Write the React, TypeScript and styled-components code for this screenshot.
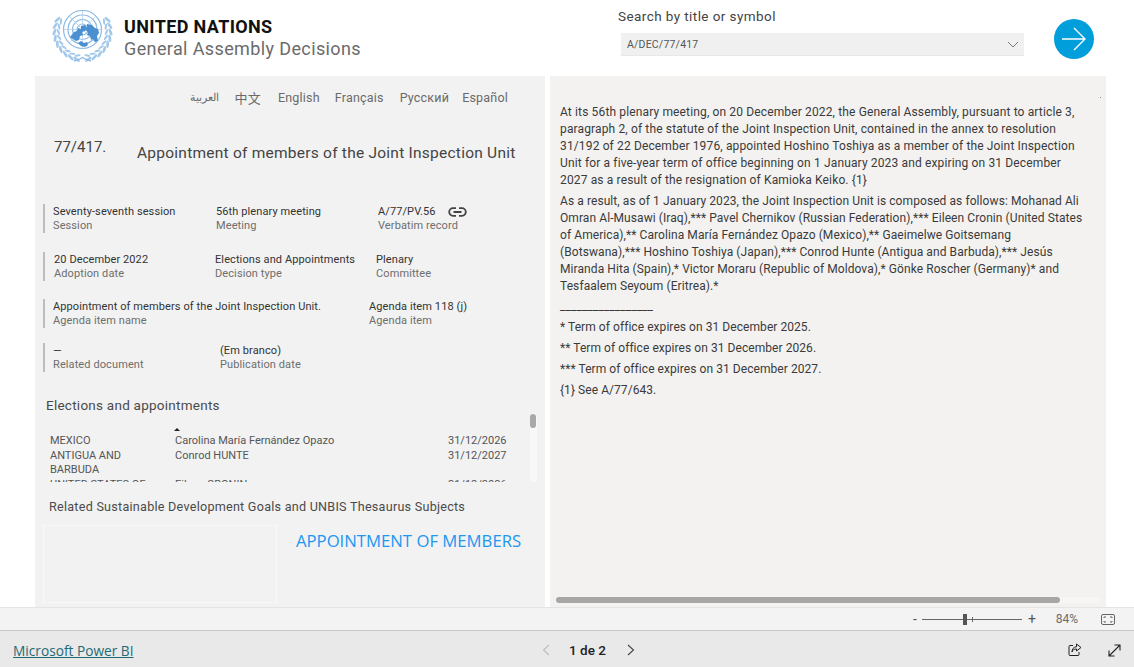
import React from 'react';
import styled, { createGlobalStyle } from 'styled-components';

const DIN = `'Roboto', 'Noto Sans CJK SC', sans-serif`;

const GlobalStyle = createGlobalStyle`
	html, body {
		margin: 0;
		padding: 0;
		background: #fff;
		font-family: ${DIN};
		overflow: hidden;
	}
`;

const Page = styled.div`
	display: flex;
	flex-direction: column;
	width: 1134px;
	height: 667px;
`;

const Header = styled.header`
	display: flex;
	height: 76px;
	padding-left: 51px;
	box-sizing: border-box;
`;

const Brand = styled.div`
	display: flex;
	width: 567px;
	padding-top: 10px;
`;

const BrandText = styled.div`
	margin: 6px 0 0 10px;
`;

const BrandTitle = styled.div`
	font-size: 18px;
	font-weight: 700;
	line-height: 22px;
	letter-spacing: 0.36px;
	color: #111;
`;

const BrandSub = styled.div`
	font-size: 18px;
	line-height: 22px;
	color: #6b6b6b;
	letter-spacing: 0.38px;
`;

const Search = styled.div`
	width: 436px;
	padding-top: 7px;
`;

const SearchLabel = styled.div`
	font-size: 13.5px;
	line-height: 18px;
	letter-spacing: 0.42px;
	color: #444;
`;

const Select = styled.div`
	display: flex;
	align-items: center;
	justify-content: space-between;
	box-sizing: border-box;
	width: 403px;
	height: 23px;
	margin: 8px 0 0 3px;
	padding: 0 5px 0 6px;
	background: #f0f0f0;
	border-bottom: 1px solid #e8e8e8;
	font-size: 10.5px;
	letter-spacing: 0.2px;
	color: #555;
`;

const GoButton = styled.div`
	display: flex;
	align-items: center;
	justify-content: center;
	width: 40px;
	height: 40px;
	margin-top: 19px;
	border-radius: 50%;
	background: #009edb;
`;

const Main = styled.main`
	display: flex;
	gap: 5px;
	height: 531px;
	padding-left: 35px;
`;

const LeftPanel = styled.section`
	box-sizing: border-box;
	width: 510px;
	padding: 0 8px;
	background: #f2f2f2;
`;

const Languages = styled.nav`
	display: flex;
	justify-content: flex-end;
	align-items: center;
	height: 42px;
	padding: 0 29px 0 0;
	color: #6a6a6a;
`;

const LangItem = styled.span<{ $size?: number; $after?: number }>`
	margin-right: ${({ $after }) => $after ?? 0}px;
	font-size: ${({ $size }) => $size ?? 12.5}px;
	letter-spacing: 0.2px;
`;

const TitleRow = styled.div`
	display: flex;
	height: 86px;
	padding: 19px 0 0 11px;
	box-sizing: border-box;
	color: #444;
`;

const DecisionNumber = styled.div`
	width: 83px;
	font-size: 15px;
	line-height: 20px;
`;

const DecisionTitle = styled.h1`
	margin: 6px 0 0;
	font-size: 15.5px;
	font-weight: 400;
	line-height: 20px;
	letter-spacing: 0.24px;
	white-space: nowrap;
`;

const MetaRow = styled.div<{ $cols: string; $top: number }>`
	display: grid;
	grid-template-columns: ${({ $cols }) => $cols};
	height: 29px;
	margin-top: ${({ $top }) => $top}px;
	box-sizing: border-box;
	border-left: 2px solid #bdbdbd;
`;

const Field = styled.div<{ $inset?: number }>`
	padding: 1px 0 0 ${({ $inset }) => $inset ?? 0}px;
	white-space: nowrap;
`;

const FieldValue = styled.div`
	display: flex;
	align-items: center;
	gap: 12px;
	font-size: 11px;
	line-height: 14px;
	letter-spacing: 0.1px;
	color: #333;
`;

const FieldLabel = styled.div`
	font-size: 11px;
	line-height: 14px;
	letter-spacing: 0.1px;
	color: #6e6e6e;
`;

const SectionHeading = styled.h2<{ $left: number; $top: number; $size: number }>`
	margin: ${({ $top }) => $top}px 0 0 ${({ $left }) => $left}px;
	font-size: ${({ $size }) => $size}px;
	font-weight: 400;
	line-height: 18px;
	letter-spacing: 0.25px;
	color: #4a4a4a;
	white-space: nowrap;
`;

const TableWrap = styled.div`
	position: relative;
	height: 69px;
	margin-top: -1px;
	overflow: hidden;
`;

const TableRows = styled.div`
	padding: 21px 0 0 7px;
`;

const TableRow = styled.div`
	display: grid;
	grid-template-columns: 125px 273px 70px;
	font-size: 11px;
	line-height: 14.5px;
	color: #555;
`;

const SortMark = styled.div`
	position: absolute;
	left: 131px;
	top: 15px;
	width: 0;
	height: 0;
	border-left: 3px solid transparent;
	border-right: 3px solid transparent;
	border-bottom: 3px solid #222;
`;

const ScrollTrack = styled.div`
	position: absolute;
	right: 0;
	top: 0;
	width: 7px;
	height: 69px;
	border-radius: 3px;
	background: #f8f8f8;
`;

const ScrollThumb = styled.div`
	width: 6px;
	height: 14px;
	margin-top: 1px;
	border-radius: 3px;
	background: #a8a8a8;
`;

const SubjectRow = styled.div`
	display: flex;
	margin-top: 9px;
`;

const SubjectBox = styled.div`
	box-sizing: border-box;
	width: 234px;
	height: 78px;
	border: 1px solid #f8f8f8;
`;

const SubjectLink = styled.div`
	margin: 6px 0 0 19px;
	font-family: 'Open Sans', sans-serif;
	font-size: 16.7px;
	line-height: 20px;
	color: #2196f3;
	white-space: nowrap;
`;

const RightPanel = styled.section`
	position: relative;
	box-sizing: border-box;
	width: 556px;
	padding: 28px 0 0 10px;
	background: #f3f2f1;
	overflow: hidden;
`;

const Para = styled.p<{ $gap?: number; $spacing?: number }>`
	margin: 0 0 ${({ $gap }) => $gap ?? 4}px;
	font-size: 12px;
	line-height: 17px;
	letter-spacing: ${({ $spacing }) => $spacing ?? 0.06}px;
	color: #3a3a3a;
	white-space: nowrap;
`;

const TinyDot = styled.div`
	position: absolute;
	right: 5px;
	top: 21px;
	width: 1px;
	height: 1px;
	background: #888;
`;

const HScrollTrack = styled.div`
	position: absolute;
	left: 6px;
	bottom: 4px;
	width: 544px;
	height: 6px;
	border-radius: 3px;
	background: #f6f6f6;
`;

const HScrollThumb = styled.div`
	width: 504px;
	height: 6px;
	border-radius: 3px;
	background: #a6a6a6;
`;

const ZoomBar = styled.div`
	display: flex;
	align-items: center;
	box-sizing: border-box;
	height: 24px;
	padding-left: 913px;
	background: #f3f3f3;
	border-top: 1px solid #e4e4e4;
	border-bottom: 1px solid #c8c8c8;
	color: #666;
`;

const ZoomSign = styled.span<{ $left: number }>`
	margin-left: ${({ $left }) => $left}px;
	font-size: 14px;
	line-height: 14px;
	color: #555;
`;

const ZoomTrack = styled.div`
	position: relative;
	width: 100px;
	height: 1px;
	margin-left: 5px;
	background: #666;
`;

const ZoomThumb = styled.div`
	position: absolute;
	left: 41px;
	top: -5px;
	width: 4px;
	height: 11px;
	background: #555;
`;

const ZoomTick = styled.div`
	position: absolute;
	left: 50px;
	top: -2px;
	width: 1px;
	height: 5px;
	background: #666;
`;

const ZoomValue = styled.span`
	margin: 0 23px 0 20px;
	font-size: 12px;
	color: #6b6b6b;
`;

const Footer = styled.footer`
	display: flex;
	align-items: center;
	flex: 1;
	padding: 2px 0 0 13px;
	background: #e9e9e9;
`;

const PowerBiLink = styled.a`
	width: 529px;
	padding-top: 1px;
	font-family: 'Open Sans', sans-serif;
	font-size: 13.7px;
	color: #1f6b75;
	text-decoration: underline;
`;

const Pager = styled.div`
	display: flex;
	align-items: center;
	width: 526px;
	font-size: 13.5px;
	font-weight: 500;
	color: #222;
`;

const PageLabel = styled.span`
	margin: 0 21px 0 19px;
`;

const FooterIcon = styled.span<{ $left: number }>`
	display: flex;
	margin-left: ${({ $left }) => $left}px;
`;

const UnLogo: React.FC = () => {
	const angles = [-26, -13, 0, 13, 26, 39, 52, 65, 78];
	const rad = (deg: number) => (deg * Math.PI) / 180;
	return (
		<svg width="63" height="54" viewBox="0 0 63 54">
			<g fill="none" stroke="#8dbbe4" strokeWidth="1.2">
				<circle cx="31.5" cy="19.5" r="19" />
				<circle cx="31.5" cy="19.5" r="14.5" />
				<circle cx="31.5" cy="19.5" r="10" />
				<circle cx="31.5" cy="19.5" r="5.5" />
			</g>
			<path
				stroke="#a9cdec"
				strokeWidth="0.7"
				d="M31.5 .5v38M12.5 19.5h38M18 6l27 27M45 6L18 33"
			/>
			<g fill="#4a90d0">
				<path d="M19 27l4-5 3-1 1-3 3 1 0-3 4-1 2 3-2 3-3 1 1 3-3 1-1 4-3 1-3-2z" />
				<path d="M36 14l5 1 3 3 3 1 1 4-2 3 1 5-3 1-2-3-2 1-1-4-3-1 1-3-3-2 2-3z" />
				<path d="M27 33l3-2 3 2 3-1 1 3-3 2-4-1-3-3z" />
			</g>
			<g fill="#a3c9ea">
				{angles.map((t) => {
					const c = Math.cos(rad(t));
					const s = Math.sin(rad(t));
					const outerL = 31.5 - 28 * c;
					const outerR = 31.5 + 28 * c;
					const innerL = 31.5 - 24 * c;
					const innerR = 31.5 + 24 * c;
					const outerY = 22 + 28 * s;
					const innerY = 22 + 24 * s;
					return (
						<React.Fragment key={t}>
							<ellipse cx={outerL} cy={outerY} rx="1.4" ry="3.8" transform={`rotate(${-t + 22} ${outerL} ${outerY})`} />
							<ellipse cx={outerR} cy={outerY} rx="1.4" ry="3.8" transform={`rotate(${t - 22} ${outerR} ${outerY})`} />
							<ellipse cx={innerL} cy={innerY} rx="1.1" ry="3.2" transform={`rotate(${-t - 22} ${innerL} ${innerY})`} />
							<ellipse cx={innerR} cy={innerY} rx="1.1" ry="3.2" transform={`rotate(${t + 22} ${innerR} ${innerY})`} />
						</React.Fragment>
					);
				})}
			</g>
			<path d="M23 51q5-1 8.5-3.5q3.5 2.5 8.5 3.5" fill="none" stroke="#8dbbe4" strokeWidth="1.5" />
		</svg>
	);
};

const ArrowIcon: React.FC = () => (
	<svg width="26" height="26" viewBox="0 0 26 26" fill="none" stroke="#fff" strokeWidth="1.4">
		<path d="M1 13h23M13 2l11 11-11 11" />
	</svg>
);

const ChevronDown: React.FC = () => (
	<svg width="12" height="7" viewBox="0 0 12 7" fill="none" stroke="#777" strokeWidth="1">
		<path d="M1 1l5 5 5-5" />
	</svg>
);

const LinkIcon: React.FC = () => (
	<svg width="19" height="10" viewBox="0 0 19 10" fill="none" stroke="#444" strokeWidth="1.8">
		<path d="M8 1.2H5a3.8 3.8 0 0 0 0 7.6h3M11 1.2h3a3.8 3.8 0 0 1 0 7.6h-3M5.5 5h8" />
	</svg>
);

const Chevron: React.FC<{ $dir: 'left' | 'right'; $color: string }> = ({ $dir, $color }) => (
	<svg width="8" height="12" viewBox="0 0 8 12" fill="none" stroke={$color} strokeWidth="1.1">
		<path d={$dir === 'left' ? 'M7 1L1.5 6 7 11' : 'M1 1l5.5 5L1 11'} />
	</svg>
);

const FitIcon: React.FC = () => (
	<svg width="14" height="11" viewBox="0 0 14 11" fill="none" stroke="#666" strokeWidth="1">
		<rect x="0.5" y="0.5" width="13" height="10" rx="1.5" />
		<path d="M3 4V3h2M11 4V3H9M3 7v1h2M11 7v1H9" />
	</svg>
);

const ShareIcon: React.FC = () => (
	<svg width="14" height="14" viewBox="0 0 14 14" fill="none" stroke="#222" strokeWidth="1">
		<path d="M5 2.5H2a1 1 0 0 0-1 1v8a1 1 0 0 0 1 1h8a1 1 0 0 0 1-1V9" />
		<path d="M8.5 1l4.5 3.5L8.5 8V6C6 6 4.5 7 4 9c0-3 1.5-5 4.5-5.2z" />
	</svg>
);

const ExpandIcon: React.FC = () => (
	<svg width="13" height="13" viewBox="0 0 13 13" fill="none" stroke="#222" strokeWidth="1.1">
		<path d="M1 12L12 1M6.5 1H12v5.5M1 6.5V12h5.5" />
	</svg>
);

const Meta: React.FC<{ value: React.ReactNode; label: string; inset?: number }> = ({ value, label, inset }) => (
	<Field $inset={inset}>
		<FieldValue>{value}</FieldValue>
		<FieldLabel>{label}</FieldLabel>
	</Field>
);

const firstPara = [
	'At its 56th plenary meeting, on 20 December 2022, the General Assembly, pursuant to article 3,',
	'paragraph 2, of the statute of the Joint Inspection Unit, contained in the annex to resolution',
	'31/192 of 22 December 1976, appointed Hoshino Toshiya as a member of the Joint Inspection',
	'Unit for a five-year term of office beginning on 1 January 2023 and expiring on 31 December',
	'2027 as a result of the resignation of Kamioka Keiko. {1}',
];

const secondPara = [
	'As a result, as of 1 January 2023, the Joint Inspection Unit is composed as follows: Mohanad Ali',
	'Omran Al-Musawi (Iraq),*** Pavel Chernikov (Russian Federation),*** Eileen Cronin (United States',
	'of America),** Carolina María Fernández Opazo (Mexico),** Gaeimelwe Goitsemang',
	'(Botswana),*** Hoshino Toshiya (Japan),*** Conrod Hunte (Antigua and Barbuda),*** Jesús',
	'Miranda Hita (Spain),* Victor Moraru (Republic of Moldova),* Gönke Roscher (Germany)* and',
	'Tesfaalem Seyoum (Eritrea).*',
];

const withBreaks = (lines: string[]) =>
	lines.map((line) => (
		<React.Fragment key={line}>
			{line}
			<br />
		</React.Fragment>
	));

const App: React.FC = () => (
	<Page>
		<GlobalStyle />
		<Header>
			<Brand>
				<UnLogo />
				<BrandText>
					<BrandTitle>UNITED NATIONS</BrandTitle>
					<BrandSub>General Assembly Decisions</BrandSub>
				</BrandText>
			</Brand>
			<Search>
				<SearchLabel>Search by title or symbol</SearchLabel>
				<Select>
					A/DEC/77/417
					<ChevronDown />
				</Select>
			</Search>
			<GoButton>
				<ArrowIcon />
			</GoButton>
		</Header>
		<Main>
			<LeftPanel>
				<Languages>
					<LangItem $size={11} $after={16}>العربية</LangItem>
					<LangItem $size={13} $after={17}>中文</LangItem>
					<LangItem $after={15}>English</LangItem>
					<LangItem $after={16}>Français</LangItem>
					<LangItem $after={13}>Русский</LangItem>
					<LangItem>Español</LangItem>
				</Languages>
				<TitleRow>
					<DecisionNumber>77/417.</DecisionNumber>
					<DecisionTitle>Appointment of members of the Joint Inspection Unit</DecisionTitle>
				</TitleRow>
				<MetaRow $cols="171px 162px 1fr" $top={0}>
					<Meta inset={8} value="Seventy-seventh session" label="Session" />
					<Meta value="56th plenary meeting" label="Meeting" />
					<Meta
						value={
							<>
								A/77/PV.56
								<LinkIcon />
							</>
						}
						label="Verbatim record"
					/>
				</MetaRow>
				<MetaRow $cols="170px 161px 1fr" $top={19}>
					<Meta inset={9} value="20 December 2022" label="Adoption date" />
					<Meta value="Elections and Appointments" label="Decision type" />
					<Meta value="Plenary" label="Committee" />
				</MetaRow>
				<MetaRow $cols="324px 1fr" $top={18}>
					<Meta inset={8} value="Appointment of members of the Joint Inspection Unit." label="Agenda item name" />
					<Meta value="Agenda item 118 (j)" label="Agenda item" />
				</MetaRow>
				<MetaRow $cols="175px 1fr" $top={15}>
					<Meta inset={8} value="—" label="Related document" />
					<Meta value="(Em branco)" label="Publication date" />
				</MetaRow>
				<SectionHeading $left={3} $top={24} $size={13.5}>
					Elections and appointments
				</SectionHeading>
				<TableWrap>
					<SortMark />
					<TableRows>
						<TableRow>
							<span>MEXICO</span>
							<span>Carolina María Fernández Opazo</span>
							<span>31/12/2026</span>
						</TableRow>
						<TableRow>
							<span>
								ANTIGUA AND
								<br />
								BARBUDA
							</span>
							<span>Conrod HUNTE</span>
							<span>31/12/2027</span>
						</TableRow>
						<TableRow>
							<span>UNITED STATES OF</span>
							<span>Eileen CRONIN</span>
							<span>31/12/2026</span>
						</TableRow>
					</TableRows>
					<ScrollTrack>
						<ScrollThumb />
					</ScrollTrack>
				</TableWrap>
				<SectionHeading $left={6} $top={16} $size={12.6}>
					Related Sustainable Development Goals and UNBIS Thesaurus Subjects
				</SectionHeading>
				<SubjectRow>
					<SubjectBox />
					<SubjectLink>APPOINTMENT OF MEMBERS</SubjectLink>
				</SubjectRow>
			</LeftPanel>
			<RightPanel>
				<TinyDot />
				<Para $spacing={0.14}>{withBreaks(firstPara)}</Para>
				<Para $gap={3} $spacing={0.08}>{withBreaks(secondPara)}</Para>
				<Para>_________________</Para>
				<Para>* Term of office expires on 31 December 2025.</Para>
				<Para>** Term of office expires on 31 December 2026.</Para>
				<Para>*** Term of office expires on 31 December 2027.</Para>
				<Para>{'{1}'} See A/77/643.</Para>
				<HScrollTrack>
					<HScrollThumb />
				</HScrollTrack>
			</RightPanel>
		</Main>
		<ZoomBar>
			<ZoomSign $left={0}>-</ZoomSign>
			<ZoomTrack>
				<ZoomThumb />
				<ZoomTick />
			</ZoomTrack>
			<ZoomSign $left={6}>+</ZoomSign>
			<ZoomValue>84%</ZoomValue>
			<FitIcon />
		</ZoomBar>
		<Footer>
			<PowerBiLink>Microsoft Power BI</PowerBiLink>
			<Pager>
				<Chevron $dir="left" $color="#bdbdbd" />
				<PageLabel>1 de 2</PageLabel>
				<Chevron $dir="right" $color="#444" />
			</Pager>
			<FooterIcon $left={0}>
				<ShareIcon />
			</FooterIcon>
			<FooterIcon $left={26}>
				<ExpandIcon />
			</FooterIcon>
		</Footer>
	</Page>
);

export default App;
